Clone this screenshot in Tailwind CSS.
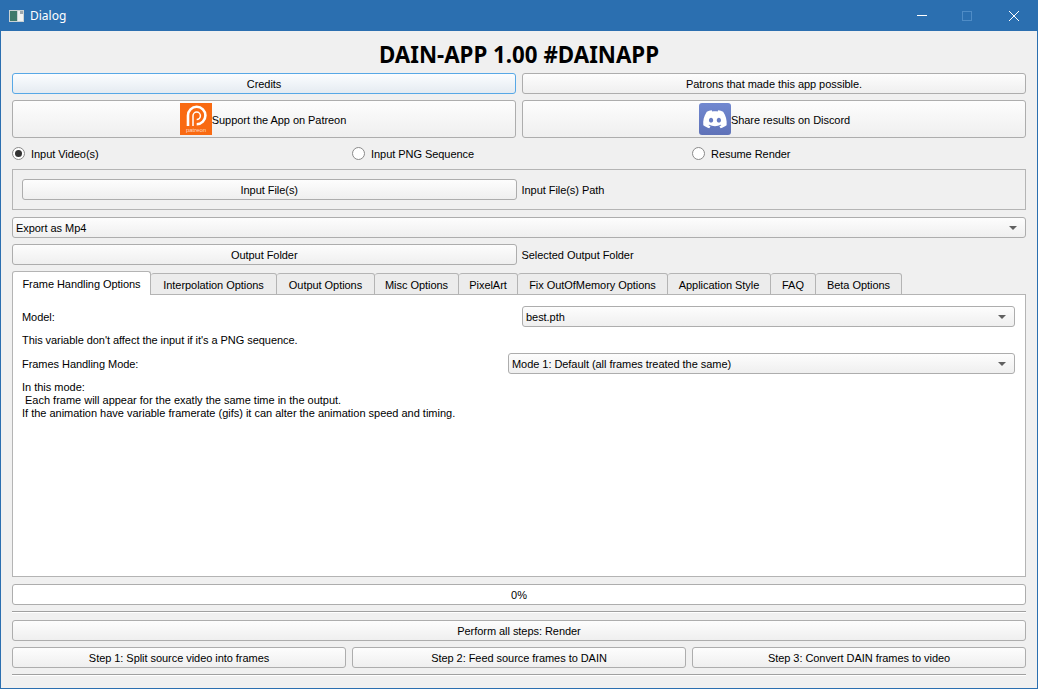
<!DOCTYPE html>
<html lang="en">
<head>
  <meta charset="UTF-8" />
  <title>Dialog</title>
  <script src="https://cdn.jsdelivr.net/npm/@tailwindcss/browser@4"></script>
</head>
<body class="overflow-hidden bg-[#f0f0f0]">
  <div class="flex h-[689px] w-[1038px] flex-col border-x border-b border-[#2b6fb0] bg-[#f0f0f0] font-['Liberation_Sans',sans-serif] text-[11px] leading-[13px] tracking-[-0.05px] text-[#000]">
    <!-- Title bar -->
    <div class="-mx-px flex h-[31px] shrink-0 items-center bg-[#2b6fb0] pl-[9px] font-['Noto_Sans',sans-serif] text-[12px] tracking-normal text-white">
      <svg width="15" height="12" viewBox="0 0 15 12" class="mr-[6px]">
        <rect width="15" height="12" fill="#c9d2d4" />
        <rect x="1" y="1" width="7" height="10" fill="#3f7a6c" />
        <rect x="9" y="1" width="5" height="10" fill="#eef1f1" />
        <rect x="11" y="1" width="3" height="3" fill="#9aa6ad" />
      </svg>
      <span>Dialog</span>
      <div class="ml-auto flex items-center">
        <svg width="46" height="12" viewBox="0 0 46 12"><path d="M18 5.5h10" stroke="#fff" stroke-width="1" /></svg>
        <svg width="46" height="12" viewBox="0 0 46 12"><rect x="17.5" y="1.5" width="9" height="9" fill="none" stroke="#4f8cc6" /></svg>
        <svg width="46" height="12" viewBox="0 0 46 12" class="mr-[1px]"><path d="M18 1l10 10M28 1l-10 10" stroke="#fff" stroke-width="1" /></svg>
      </div>
    </div>

    <div class="flex min-h-0 flex-1 flex-col px-[11px]">
      <h1 class="flex h-[42px] shrink-0 items-center justify-center pt-[4px] font-['Noto_Sans',sans-serif] text-[22.3px] font-bold tracking-normal">DAIN-APP 1.00 #DAINAPP</h1>

      <div class="grid grid-cols-2 gap-x-[6px]">
        <button class="flex h-[21px] items-center justify-center rounded-[3px] border border-[#57a8e6] bg-gradient-to-b from-[#fbfdff] to-[#e5ebf1] pt-[2px]">Credits</button>
        <button class="flex h-[21px] items-center justify-center rounded-[3px] border border-[#adadad] bg-gradient-to-b from-[#fdfdfd] to-[#efefef] pt-[2px]">Patrons that made this app possible.</button>
      </div>

      <div class="mt-[6px] grid grid-cols-2 gap-x-[6px]">
        <button class="flex h-[38px] items-center justify-center rounded-[3px] border border-[#adadad] bg-gradient-to-b from-[#fdfdfd] to-[#efefef] pr-[2px]">
          <svg width="32" height="32" viewBox="0 0 32 32" class="shrink-0">
            <rect width="32" height="32" fill="#f96a12" />
            <path d="M8 23V12.5a8.7 8.7 0 1 1 8.7 8.7" fill="none" stroke="#fff" stroke-width="2.6" />
            <path d="M13 23V12.8a3.7 3.7 0 1 1 3.7 3.7" fill="none" stroke="#fff" stroke-width="1.5" />
            <text x="16" y="29" text-anchor="middle" font-size="6" fill="#ffd9c0">patreon</text>
          </svg>
          <span class="pt-[2px]">Support the App on Patreon</span>
        </button>
        <button class="flex h-[38px] items-center justify-center rounded-[3px] border border-[#adadad] bg-gradient-to-b from-[#fdfdfd] to-[#efefef] pl-[1px]">
          <svg width="32" height="32" viewBox="0 0 32 32" class="shrink-0">
            <defs><linearGradient id="discordBg" x1="0" y1="0" x2="0" y2="1"><stop offset="0" stop-color="#7188d0" /><stop offset="1" stop-color="#5f72b8" /></linearGradient></defs>
            <rect width="32" height="32" rx="3" fill="url(#discordBg)" />
            <g transform="translate(4.2 4.5) scale(0.98)"><path fill="#fff" d="M20.317 4.3698a19.7913 19.7913 0 00-4.8851-1.5152.0741.0741 0 00-.0785.0371c-.211.3753-.4447.8648-.6083 1.2495-1.8447-.2762-3.68-.2762-5.4868 0-.1636-.3933-.4058-.8742-.6177-1.2495a.077.077 0 00-.0785-.037 19.7363 19.7363 0 00-4.8852 1.515.0699.0699 0 00-.0321.0277C.5334 9.0458-.319 13.5799.0992 18.0578a.0824.0824 0 00.0312.0561c2.0528 1.5076 4.0413 2.4228 5.9929 3.0294a.0777.0777 0 00.0842-.0276c.4616-.6304.8731-1.2952 1.226-1.9942a.076.076 0 00-.0416-.1057c-.6528-.2476-1.2743-.5495-1.8722-.8923a.077.077 0 01-.0076-.1277c.1258-.0943.2517-.1923.3718-.2914a.0743.0743 0 01.0776-.0105c3.9278 1.7933 8.18 1.7933 12.0614 0a.0739.0739 0 01.0785.0095c.1202.099.246.1981.3728.2924a.077.077 0 01-.0066.1276 12.2986 12.2986 0 01-1.873.8914.0766.0766 0 00-.0407.1067c.3604.698.7719 1.3628 1.225 1.9932a.076.076 0 00.0842.0286c1.961-.6067 3.9495-1.5219 6.0023-3.0294a.077.077 0 00.0313-.0552c.5004-5.177-.8382-9.6739-3.5485-13.6604a.061.061 0 00-.0312-.0286zM8.02 15.3312c-1.1825 0-2.1569-1.0857-2.1569-2.419 0-1.3332.9555-2.4189 2.157-2.4189 1.2108 0 2.1757 1.0952 2.1568 2.419 0 1.3332-.9555 2.4189-2.1569 2.4189zm7.9748 0c-1.1825 0-2.1569-1.0857-2.1569-2.419 0-1.3332.9554-2.4189 2.1569-2.4189 1.2108 0 2.1757 1.0952 2.1568 2.419 0 1.3332-.946 2.4189-2.1568 2.4189Z" /></g>
          </svg>
          <span class="pt-[2px]">Share results on Discord</span>
        </button>
      </div>

      <!-- Radios -->
      <div class="grid h-[31px] shrink-0 grid-cols-3 items-center gap-x-[6px]">
        <label class="flex items-center gap-[6px]"><span class="flex size-[13px] items-center justify-center rounded-full border border-[#8a8a8a] bg-white"><span class="size-[7px] rounded-full bg-[#333]"></span></span><span class="pt-[2px]">Input Video(s)</span></label>
        <label class="flex items-center gap-[6px]"><span class="size-[13px] rounded-full border border-[#8a8a8a] bg-white"></span><span class="pt-[2px]">Input PNG Sequence</span></label>
        <label class="flex items-center gap-[6px]"><span class="size-[13px] rounded-full border border-[#8a8a8a] bg-white"></span><span class="pt-[2px]">Resume Render</span></label>
      </div>

      <div class="grid h-[41px] shrink-0 grid-cols-2 items-center gap-x-[5px] border border-[#b4b4b4] pl-[9px] pr-[9px]">
        <button class="flex h-[21px] items-center justify-center rounded-[3px] border border-[#adadad] bg-gradient-to-b from-[#fdfdfd] to-[#efefef] pt-[2px]">Input File(s)</button>
        <span class="pt-[2px]">Input File(s) Path</span>
      </div>

      <div class="mt-[7px] flex h-[21px] shrink-0 items-center justify-between rounded-[3px] border border-[#adadad] bg-gradient-to-b from-[#fdfdfd] to-[#efefef] pl-[3px] pr-[8px]">
        <span class="pt-[2px]">Export as Mp4</span>
        <span class="size-0 border-x-[4px] border-t-[4px] border-x-transparent border-t-[#606060]"></span>
      </div>

      <div class="mt-[6px] grid grid-cols-2 items-center gap-x-[5px]">
        <button class="flex h-[21px] items-center justify-center rounded-[3px] border border-[#adadad] bg-gradient-to-b from-[#fdfdfd] to-[#efefef] pt-[2px]">Output Folder</button>
        <span class="pt-[2px]">Selected Output Folder</span>
      </div>

      <!-- Tabs -->
      <div class="relative z-10 mt-[6px] flex h-[24px] shrink-0 items-end">
        <div class="flex h-[24px] w-[139px] items-center justify-center rounded-t-[3px] border border-b-0 border-[#b4b4b4] bg-white pt-px">Frame Handling Options</div>
        <div class="flex h-[22px] w-[126px] items-center justify-center rounded-t-[3px] border-y border-r border-[#b4b4b4] bg-[#ececec] pt-[3px]">Interpolation Options</div>
        <div class="flex h-[22px] w-[98px] items-center justify-center rounded-t-[3px] border-y border-r border-[#b4b4b4] bg-[#ececec] pt-[3px]">Output Options</div>
        <div class="flex h-[22px] w-[84px] items-center justify-center rounded-t-[3px] border-y border-r border-[#b4b4b4] bg-[#ececec] pt-[3px]">Misc Options</div>
        <div class="flex h-[22px] w-[59px] items-center justify-center rounded-t-[3px] border-y border-r border-[#b4b4b4] bg-[#ececec] pt-[3px]">PixelArt</div>
        <div class="flex h-[22px] w-[150px] items-center justify-center rounded-t-[3px] border-y border-r border-[#b4b4b4] bg-[#ececec] pt-[3px]">Fix OutOfMemory Options</div>
        <div class="flex h-[22px] w-[103px] items-center justify-center rounded-t-[3px] border-y border-r border-[#b4b4b4] bg-[#ececec] pt-[3px]">Application Style</div>
        <div class="flex h-[22px] w-[45px] items-center justify-center rounded-t-[3px] border-y border-r border-[#b4b4b4] bg-[#ececec] pt-[3px]">FAQ</div>
        <div class="flex h-[22px] w-[86px] items-center justify-center rounded-t-[3px] border-y border-r border-[#b4b4b4] bg-[#ececec] pt-[3px]">Beta Options</div>
      </div>
      <div class="-mt-px h-[283px] shrink-0 border border-[#b4b4b4] bg-white pl-[9px] pr-[10px] pt-[11px]">
        <div class="flex h-[21px] items-center justify-between">
          <span class="pt-[2px]">Model:</span>
          <div class="flex h-[21px] w-[493px] items-center justify-between rounded-[3px] border border-[#adadad] bg-gradient-to-b from-[#fdfdfd] to-[#efefef] pl-[3px] pr-[8px]">
            <span class="pt-[2px]">best.pth</span>
            <span class="size-0 border-x-[4px] border-t-[4px] border-x-transparent border-t-[#606060]"></span>
          </div>
        </div>
        <p class="mt-[7px]">This variable don't affect the input if it's a PNG sequence.</p>
        <div class="mt-[6px] flex h-[21px] items-center justify-between">
          <span class="pt-[2px]">Frames Handling Mode:</span>
          <div class="flex h-[21px] w-[507px] items-center justify-between rounded-[3px] border border-[#adadad] bg-gradient-to-b from-[#fdfdfd] to-[#efefef] pl-[3px] pr-[8px]">
            <span class="pt-[2px]">Mode 1: Default (all frames treated the same)</span>
            <span class="size-0 border-x-[4px] border-t-[4px] border-x-transparent border-t-[#606060]"></span>
          </div>
        </div>
        <p class="mt-[7px] whitespace-pre tracking-[-0.01px]">In this mode:
 Each frame will appear for the exatly the same time in the output.
If the animation have variable framerate (gifs) it can alter the animation speed and timing.</p>
      </div>

      <!-- Progress -->
      <div class="mt-[7px] flex h-[21px] shrink-0 items-center justify-center rounded-[3px] border border-[#adadad] bg-white pt-[2px]">0%</div>
      <div class="mt-[6px] h-[2px] shrink-0 border-t border-[#a0a0a0] bg-white"></div>

      <button class="mt-[7px] flex h-[21px] shrink-0 items-center justify-center rounded-[3px] border border-[#adadad] bg-gradient-to-b from-[#fdfdfd] to-[#efefef] pt-[2px]">Perform all steps: Render</button>
      <div class="mt-[6px] grid shrink-0 grid-cols-3 gap-x-[6px]">
        <button class="flex h-[21px] items-center justify-center rounded-[3px] border border-[#adadad] bg-gradient-to-b from-[#fdfdfd] to-[#efefef] pt-[2px]">Step 1: Split source video into frames</button>
        <button class="flex h-[21px] items-center justify-center rounded-[3px] border border-[#adadad] bg-gradient-to-b from-[#fdfdfd] to-[#efefef] pt-[2px]">Step 2: Feed source frames to DAIN</button>
        <button class="flex h-[21px] items-center justify-center rounded-[3px] border border-[#adadad] bg-gradient-to-b from-[#fdfdfd] to-[#efefef] pt-[2px]">Step 3: Convert DAIN frames to video</button>
      </div>
      <div class="mt-[6px] h-[2px] shrink-0 border-t border-[#a0a0a0] bg-white"></div>
    </div>
  </div>
</body>
</html>
